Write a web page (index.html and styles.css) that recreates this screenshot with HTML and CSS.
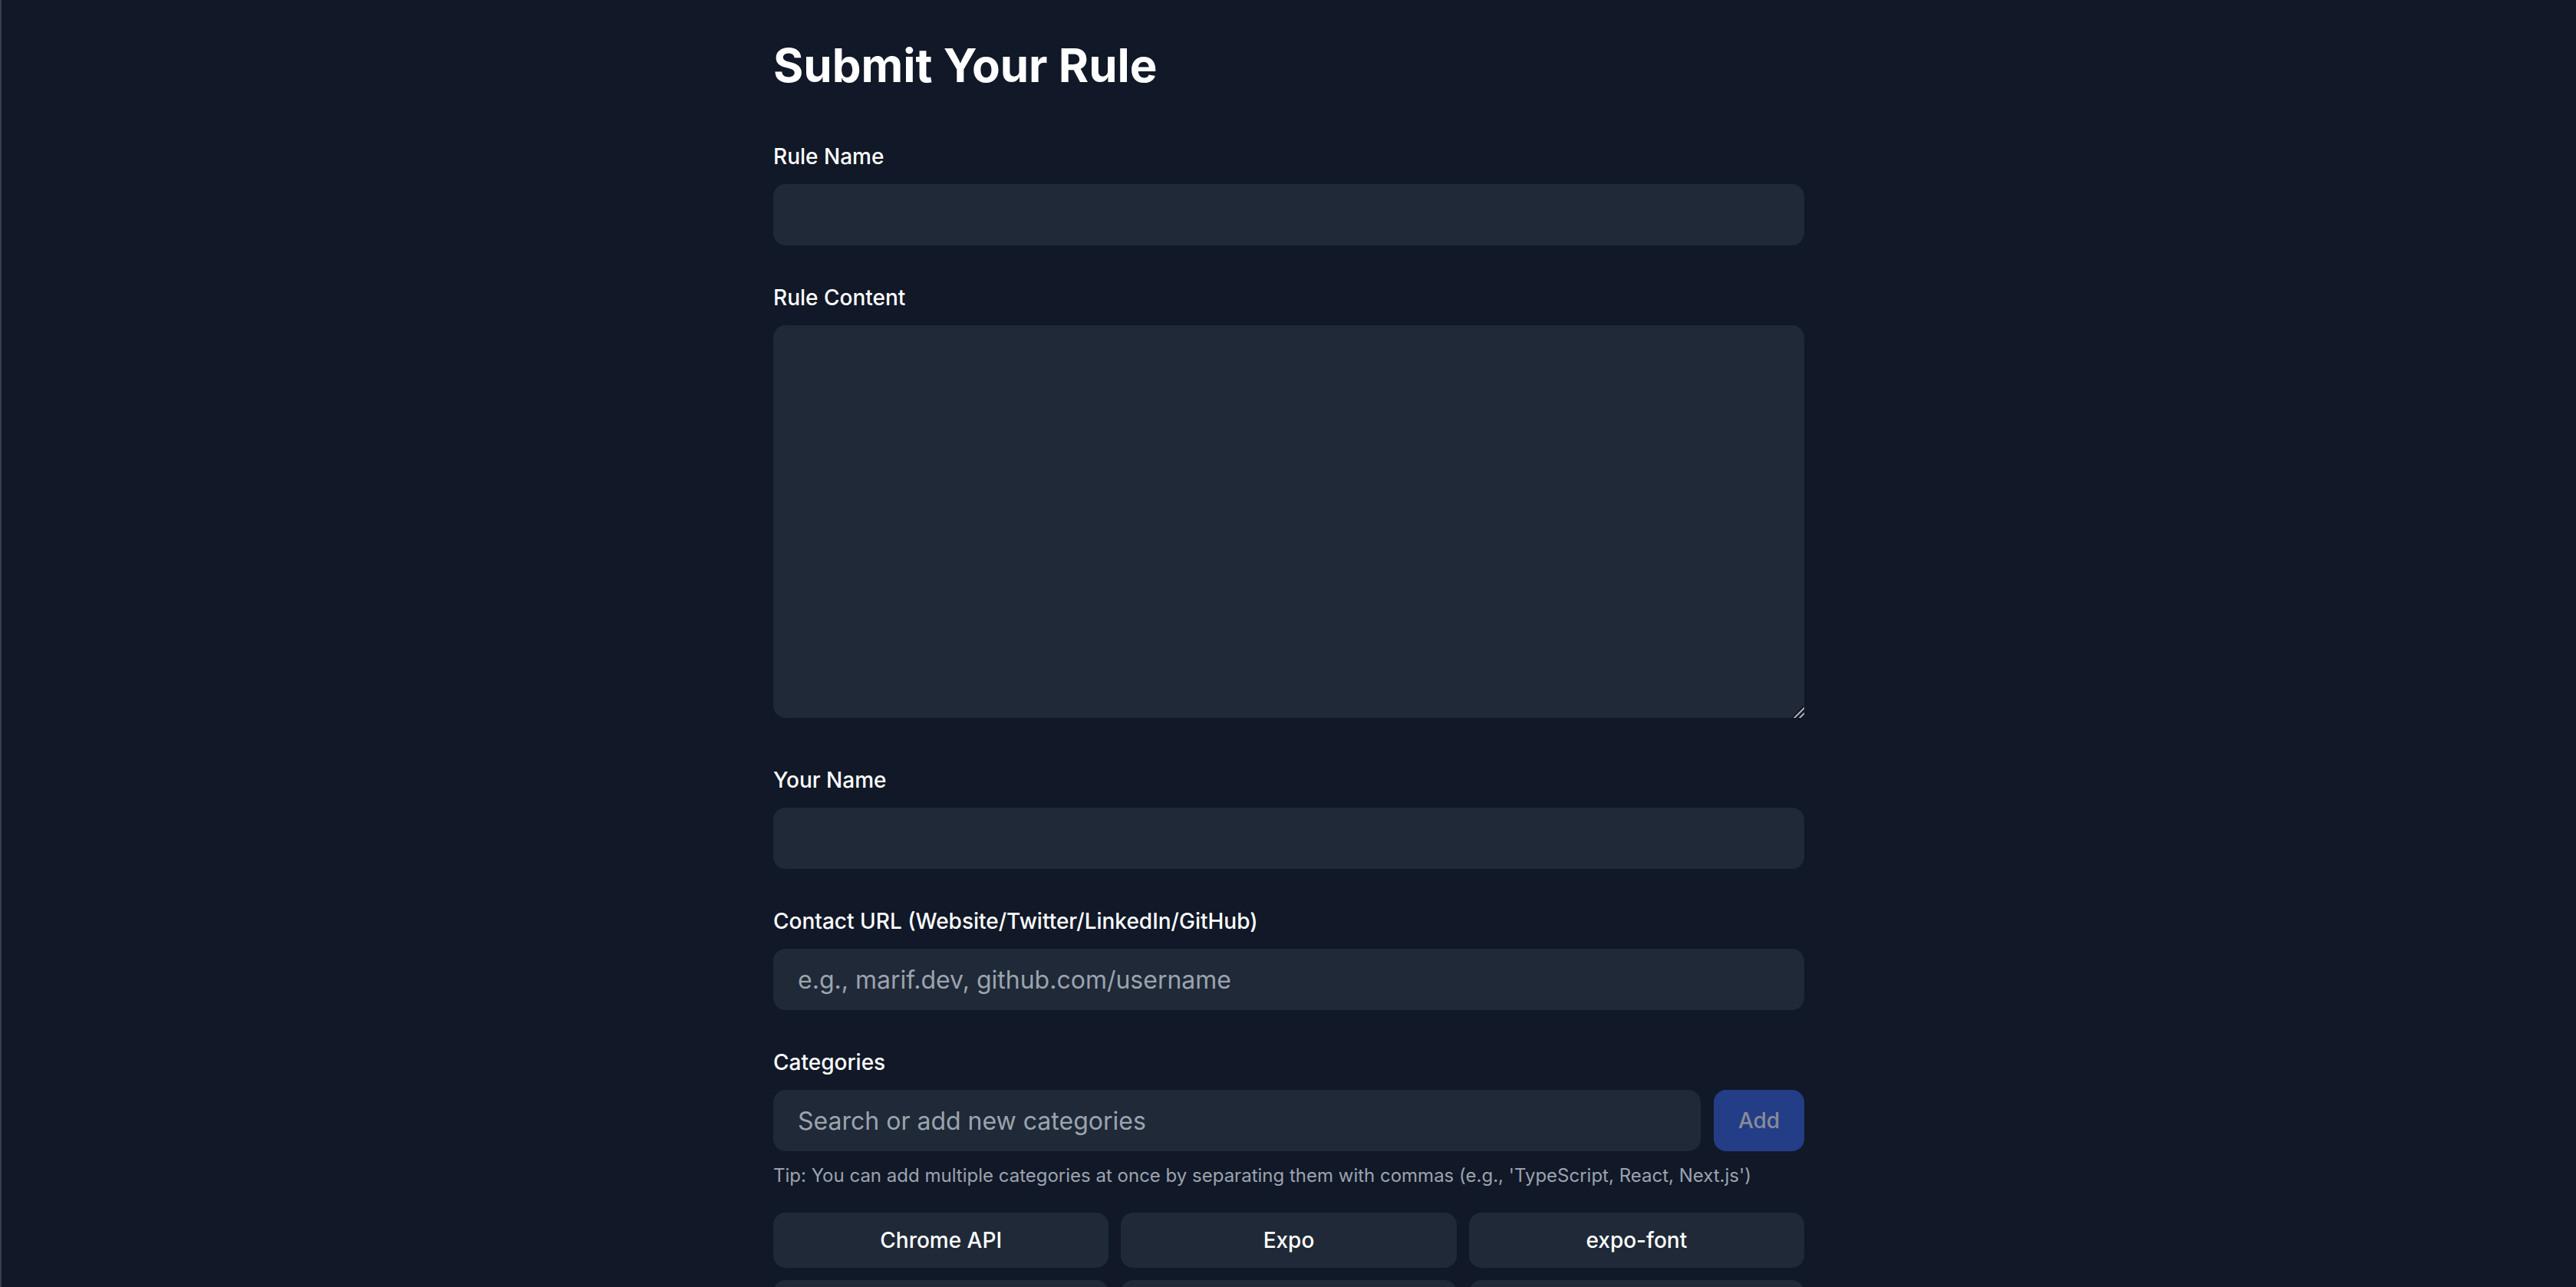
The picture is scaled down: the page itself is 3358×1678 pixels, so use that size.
FILE: index.html
```html
<!DOCTYPE html>
<html lang="en">
<head>
<meta charset="utf-8">
<title>Submit Your Rule</title>
<link rel="stylesheet" href="styles.css">
</head>
<body>
<main class="page">
  <h1 class="title">Submit Your Rule</h1>
  <form class="form">
    <div class="field">
      <label class="label" for="rule-name">Rule Name</label>
      <input class="input" id="rule-name" type="text">
    </div>
    <div class="field">
      <label class="label" for="rule-content">Rule Content</label>
      <textarea class="input textarea" id="rule-content"></textarea>
    </div>
    <div class="field">
      <label class="label" for="your-name">Your Name</label>
      <input class="input" id="your-name" type="text">
    </div>
    <div class="field">
      <label class="label" for="contact">Contact URL (Website/Twitter/LinkedIn/GitHub)</label>
      <input class="input" id="contact" type="text" placeholder="e.g., marif.dev, github.com/username">
    </div>
    <div class="field">
      <label class="label" for="categories">Categories</label>
      <div class="cat-row">
        <input class="input cat-input" id="categories" type="text" placeholder="Search or add new categories">
        <button class="add-btn" type="button" disabled>Add</button>
      </div>
      <p class="tip">Tip: You can add multiple categories at once by separating them with commas (e.g., 'TypeScript, React, Next.js')</p>
      <div class="chips">
        <button class="chip" type="button">Chrome API</button>
        <button class="chip" type="button">Expo</button>
        <button class="chip" type="button">expo-font</button>
        <button class="chip" type="button" aria-label="more"></button>
        <button class="chip" type="button" aria-label="more"></button>
        <button class="chip" type="button" aria-label="more"></button>
      </div>
    </div>
  </form>
</main>
</body>
</html>
```
FILE: styles.css
```css
* {
  box-sizing: border-box;
}

html {
  background: #111827;
}

body {
  margin: 0;
  min-height: 1678px;
  background: #111827;
  border-left: 2px solid #393e4a;
  font-family: Inter, "Noto Sans", "Liberation Sans", sans-serif;
  color: #ffffff;
}

.page {
  max-width: 1344px;
  margin: 0 auto;
  padding-top: 49px;
}

.title {
  margin: 0 0 63px;
  font-size: 60px;
  line-height: 72px;
  font-weight: 700;
  color: #ffffff;
}

.form {
  display: flex;
  flex-direction: column;
  gap: 48px;
}

.field {
  display: flex;
  flex-direction: column;
}

.label {
  display: block;
  margin-bottom: 16px;
  font-size: 28px;
  line-height: 40px;
  font-weight: 500;
  color: #ffffff;
}

.input {
  display: block;
  width: 100%;
  height: 80px;
  padding: 0 32px;
  border: none;
  border-radius: 16px;
  background: #1f2937;
  color: #ffffff;
  font-family: inherit;
  font-size: 32px;
  line-height: 48px;
  outline: none;
}

.input::placeholder {
  color: #9ca3af;
}

.textarea {
  height: 512px;
  padding: 16px 32px;
  margin-bottom: 13px;
  resize: vertical;
  color-scheme: dark;
}

.textarea::-webkit-resizer {
  background:
    linear-gradient(135deg, transparent 0 46%, #0b0f17 46% 50%, #a3a6ad 50% 60%, transparent 60% 100%),
    linear-gradient(135deg, transparent 0 76%, #a3a6ad 76% 86%, transparent 86% 100%);
  background-color: transparent;
}

.cat-row {
  display: flex;
  gap: 17px;
}

.cat-input {
  flex: 1;
}

.add-btn {
  width: 118px;
  height: 80px;
  padding: 0;
  border: none;
  border-radius: 16px;
  background: #233d86;
  color: #898c95;
  font-family: inherit;
  font-size: 28px;
  font-weight: 500;
}

.tip {
  margin: 16px 0 0;
  font-size: 24px;
  line-height: 32px;
  color: #9ca3af;
}

.chips {
  margin-top: 32px;
  display: grid;
  grid-template-columns: repeat(3, 1fr);
  gap: 16px;
}

.chip {
  height: 72px;
  border: none;
  border-radius: 16px;
  background: #1f2937;
  color: #ffffff;
  font-family: inherit;
  font-size: 28px;
  font-weight: 500;
}
```
